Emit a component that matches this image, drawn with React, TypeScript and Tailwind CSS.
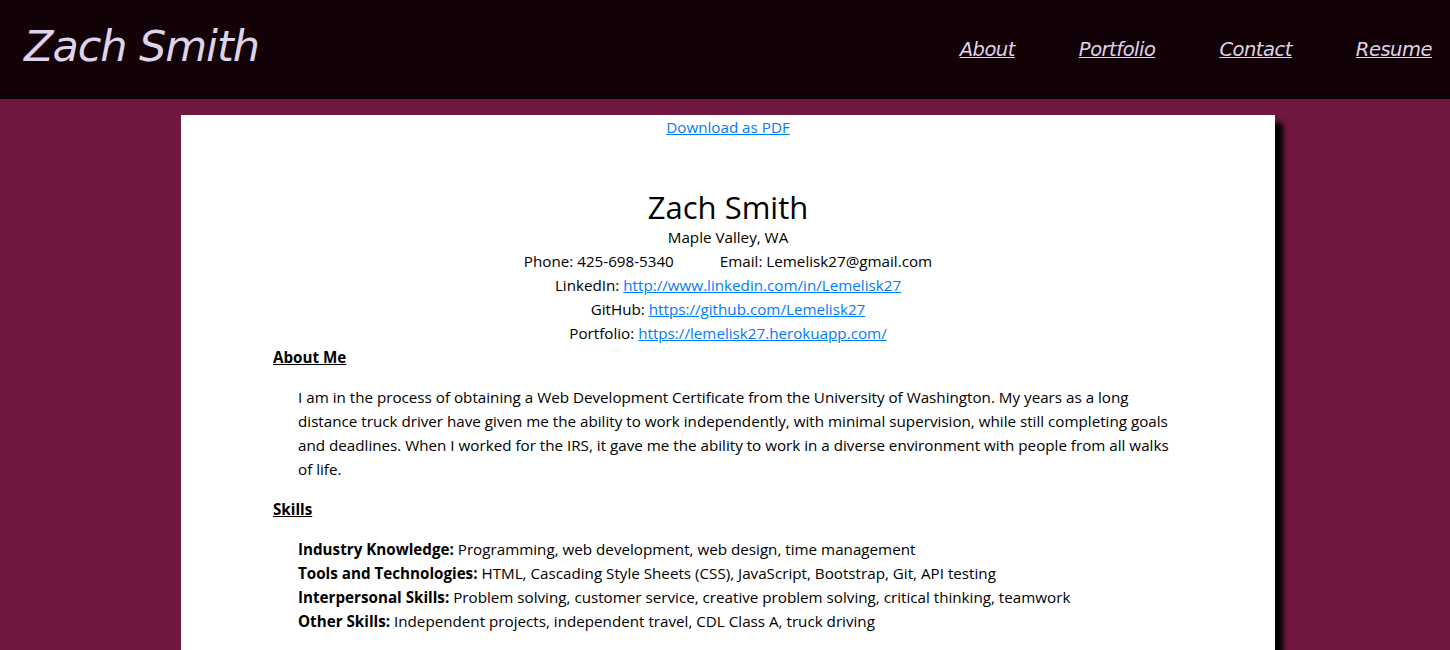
import React from 'react';

const navLinks = ['About', 'Portfolio', 'Contact', 'Resume'];

const skills = [
  { label: 'Industry Knowledge:', text: 'Programming, web development, web design, time management' },
  { label: 'Tools and Technologies:', text: 'HTML, Cascading Style Sheets (CSS), JavaScript, Bootstrap, Git, API testing' },
  { label: 'Interpersonal Skills:', text: 'Problem solving, customer service, creative problem solving, critical thinking, teamwork' },
  { label: 'Other Skills:', text: 'Independent projects, independent travel, CDL Class A, truck driving' },
];

const App = () => {
  return (
    <div className="min-h-screen bg-[#6f173e] font-['Open_Sans','Noto_Sans',sans-serif] text-black">
      {/* top bar */}
      <header className="h-[99px] bg-[#130108] flex items-start justify-between">
        <h1 className="ml-[24px] mt-[19px] text-[43px] leading-[54px] text-[#ddd3ea] italic font-['DejaVu_Sans',cursive] font-light tracking-tight">
          Zach Smith
        </h1>
        <nav className="flex items-center gap-[64px] mr-[18px] mt-[36px]">
          {navLinks.map((link) => (
            <a key={link} href="#" className="text-[19.5px] leading-[28px] text-[#ddd3ea] underline italic font-['DejaVu_Sans',cursive] tracking-tight">
              {link}
            </a>
          ))}
        </nav>
      </header>

      {/* resume card */}
      <main className="pt-[16px] pl-[6px]">
        <div className="w-[1094px] mx-auto bg-white shadow-[8px_8px_5px_#000] px-[92px] pb-10 text-[15.2px] leading-[24px]">
          <div className="text-center">
            <a href="#" className="text-[#007bff] underline">Download as PDF</a>
          </div>

          <div className="text-center mt-[50px]">
            <h2 className="text-[31px] leading-[36px] font-medium">Zach Smith</h2>
            <p>Maple Valley, WA</p>
            <p>
              Phone: 425-698-5340<span className="inline-block w-[46px]"></span>Email: Lemelisk27@gmail.com
            </p>
            <p>
              LinkedIn: <a href="#" className="text-[#007bff] underline">http://www.linkedin.com/in/Lemelisk27</a>
            </p>
            <p>
              GitHub: <a href="#" className="text-[#007bff] underline">https://github.com/Lemelisk27</a>
            </p>
            <p>
              Portfolio: <a href="#" className="text-[#007bff] underline">https://lemelisk27.herokuapp.com/</a>
            </p>
          </div>

          <h3 className="font-bold underline">About Me</h3>
          <p className="mt-4 ml-[25px]">
            I am in the process of obtaining a Web Development Certificate from the University of Washington. My years as a long distance truck driver have given me the ability to work independently, with minimal supervision, while still completing goals and deadlines. When I worked for the IRS, it gave me the ability to work in a diverse environment with people from all walks of life.
          </p>

          <h3 className="font-bold underline mt-4">Skills</h3>
          <div className="mt-4 ml-[25px]">
            {skills.map((s) => (
              <p key={s.label}>
                <strong>{s.label}</strong> {s.text}
              </p>
            ))}
          </div>
        </div>
      </main>
    </div>
  );
};

export default App;
